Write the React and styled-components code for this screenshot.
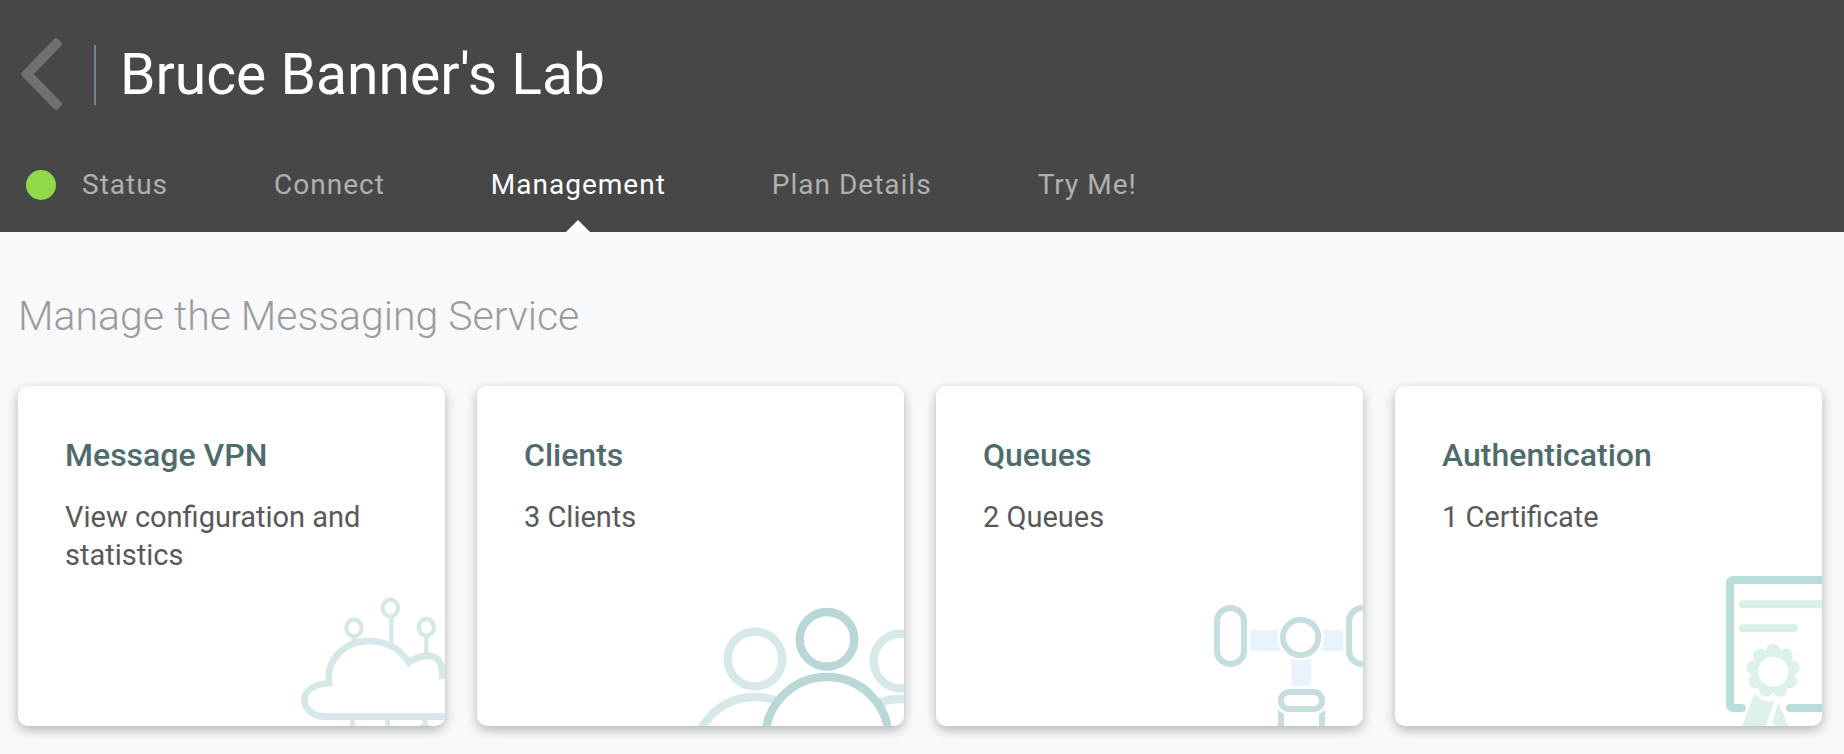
import React from "react";
import styled, { createGlobalStyle } from "styled-components";

const GlobalStyle = createGlobalStyle`
  * { box-sizing: border-box; }
  body {
    margin: 0;
    background: #f8f9fb;
    font-family: Roboto, "Liberation Sans", sans-serif;
  }
`;

const Header = styled.header`
  display: flex;
  flex-direction: column;
  background: #474747;
`;

const TitleRow = styled.div`
  display: flex;
  align-items: center;
  height: 150px;
  padding-left: 18px;
`;

const BackButton = styled.button`
  display: flex;
  padding: 0;
  border: 0;
  background: none;
  cursor: pointer;
`;

const Title = styled.h1`
  margin: 0 0 0 30px;
  padding-left: 24px;
  border-left: 2px solid #75809a;
  color: #fff;
  font-size: 57px;
  font-weight: 400;
  line-height: 60px;
`;

const TabBar = styled.nav`
  display: flex;
  align-items: stretch;
  gap: 106px;
  height: 82px;
  padding-left: 26px;
`;

const Tab = styled.a`
  position: relative;
  display: flex;
  align-items: flex-start;
  padding-top: 18px;
  color: ${(p) => (p.$active ? "#fff" : "#b0b0b0")};
  font-size: 28px;
  font-weight: 400;
  line-height: 34px;
  letter-spacing: 1px;
  text-decoration: none;
  white-space: nowrap;

  &::after {
    content: "";
    display: ${(p) => (p.$active ? "block" : "none")};
    position: absolute;
    bottom: 0;
    left: calc(50% - 12px);
    border: 12px solid transparent;
    border-top: 0;
    border-bottom-color: #fff;
  }
`;

const StatusDot = styled.span`
  width: 30px;
  height: 30px;
  margin: 2px 26px 0 0;
  border-radius: 50%;
  background: #90d94b;
`;

const Main = styled.main`
  padding: 58px 22px 28px 18px;
`;

const SectionTitle = styled.h2`
  margin: 0 0 44px;
  color: #9c9c9c;
  font-size: 41px;
  font-weight: 300;
  line-height: 52px;
`;

const CardGrid = styled.div`
  display: grid;
  grid-template-columns: repeat(4, 1fr);
  gap: 32px;
`;

const Card = styled.a`
  position: relative;
  min-height: 340px;
  padding: 48px 47px 40px;
  border-radius: 10px;
  background: #fff;
  box-shadow: 0 4px 12px rgba(0, 0, 0, 0.28);
  overflow: hidden;
  text-decoration: none;
`;

const CardTitle = styled.h3`
  margin: 0 0 22px;
  color: #506b6c;
  font-size: 32px;
  font-weight: 500;
  line-height: 42px;
`;

const CardText = styled.p`
  position: relative;
  z-index: 1;
  margin: 0;
  color: #595959;
  font-size: 29px;
  line-height: 38px;
`;

const Art = styled.svg`
  position: absolute;
  right: 0;
  bottom: 0;
`;

function ChevronIcon() {
  return (
    <svg width="46" height="76" viewBox="0 0 46 76" aria-hidden="true">
      <path
        d="M38 3L5 37L38 71L42 67L13 37L42 7Z"
        fill="#707070"
        stroke="#707070"
        strokeWidth="4"
        strokeLinejoin="round"
      />
    </svg>
  );
}

function CloudArt() {
  return (
    <Art width="164" height="146" viewBox="0 0 492 438" fill="none" stroke="#d5e7e7" aria-hidden="true">
      <g strokeWidth="13">
        <ellipse cx="219" cy="144" rx="23" ry="25" />
        <ellipse cx="328" cy="84" rx="23" ry="25" />
        <ellipse cx="436" cy="142" rx="23" ry="25" />
        <path d="M219 170V184M331 110V188M436 168V220M214 418V438M320 418V438M432 418V438" />
      </g>
      <path
        strokeWidth="20"
        d="M492 410H130C92 408 70 384 70 358C72 330 102 312 144 309C136 240 188 183 266 183C320 184 358 208 384 248C402 234 420 227 442 227C472 228 486 248 484 297"
      />
      <path stroke="none" fill="#d5e7e7" d="M200 438Q214 428 228 438ZM414 438Q432 424 450 438ZM474 284H492V297H474Z" />
    </Art>
  );
}

function PeopleArt() {
  return (
    <Art width="224" height="136" viewBox="0 0 672 408" fill="none" strokeWidth="25" aria-hidden="true">
      <g stroke="#d6e8e7">
        <circle cx="225" cy="207" r="82" />
        <circle cx="663" cy="213" r="82" />
        <circle cx="225" cy="506" r="185" />
        <circle cx="663" cy="512" r="185" />
      </g>
      <g stroke="#b9d7d6">
        <circle cx="441" cy="446" r="185" fill="#fff" />
        <circle cx="441" cy="148" r="82" />
      </g>
    </Art>
  );
}

function PipesArt() {
  return (
    <Art width="172" height="136" viewBox="0 0 516 408" fill="none" stroke="#c6dede" strokeWidth="18" aria-hidden="true">
      <path stroke="none" fill="#e9f3fd" d="M177 120H456V183H177ZM301 150H360V288H301Z" />
      <circle cx="329" cy="142" r="70" fill="#fff" stroke="none" />
      <circle cx="329" cy="142" r="53" />
      <rect x="78" y="54" width="81" height="168" rx="40" />
      <rect x="474" y="54" width="81" height="168" rx="40" />
      <path d="M270 350V408M393 350V408" />
      <rect x="252" y="288" width="159" height="86" rx="43" fill="#fff" stroke="none" />
      <rect x="270" y="306" width="123" height="51" rx="25" />
    </Art>
  );
}

const SEAL_PETALS = Array.from({ length: 9 }, (_, i) => {
  const angle = (i * 2 * Math.PI) / 9;
  return { cx: 219 + 59 * Math.sin(angle), cy: 333 - 59 * Math.cos(angle) };
});

function CertificateArt() {
  return (
    <Art width="122" height="166" viewBox="0 0 366 498" fill="none" aria-hidden="true">
      <g stroke="#b7dfd6" strokeWidth="24" strokeLinecap="round">
        <path d="M380 60H102Q90 60 90 72V432Q90 444 102 444H126M270 444H380" />
      </g>
      <path d="M129 133H380M129 205H282" stroke="#d8f1e7" strokeWidth="24" strokeLinecap="round" />
      <g fill="#dcf2e9">
        <path d="M163 402Q170 402 175 412Q193 428 214 422L222 426L197 498H127ZM235 427L265 498H232L217 490Z" />
        <circle cx="219" cy="333" r="60" />
        {SEAL_PETALS.map((petal, i) => (
          <circle key={i} cx={petal.cx} cy={petal.cy} r="22" />
        ))}
      </g>
      <circle cx="220" cy="335" r="45" fill="#fff" />
    </Art>
  );
}

const TABS = [
  { label: "Status", dot: true },
  { label: "Connect" },
  { label: "Management", active: true },
  { label: "Plan Details" },
  { label: "Try Me!" },
];

const CARDS = [
  { title: "Message VPN", text: "View configuration and statistics", art: CloudArt },
  { title: "Clients", text: "3 Clients", art: PeopleArt },
  { title: "Queues", text: "2 Queues", art: PipesArt },
  { title: "Authentication", text: "1 Certificate", art: CertificateArt },
];

export default function App() {
  return (
    <>
      <GlobalStyle />
      <Header>
        <TitleRow>
          <BackButton type="button" aria-label="Back">
            <ChevronIcon />
          </BackButton>
          <Title>Bruce Banner's Lab</Title>
        </TitleRow>
        <TabBar>
          {TABS.map(({ label, dot, active }) => (
            <Tab key={label} href="#" $active={active} aria-current={active ? "page" : undefined}>
              {dot && <StatusDot />}
              {label}
            </Tab>
          ))}
        </TabBar>
      </Header>
      <Main>
        <SectionTitle>Manage the Messaging Service</SectionTitle>
        <CardGrid>
          {CARDS.map(({ title, text, art: Picture }) => (
            <Card key={title} href="#">
              <Picture />
              <CardTitle>{title}</CardTitle>
              <CardText>{text}</CardText>
            </Card>
          ))}
        </CardGrid>
      </Main>
    </>
  );
}
